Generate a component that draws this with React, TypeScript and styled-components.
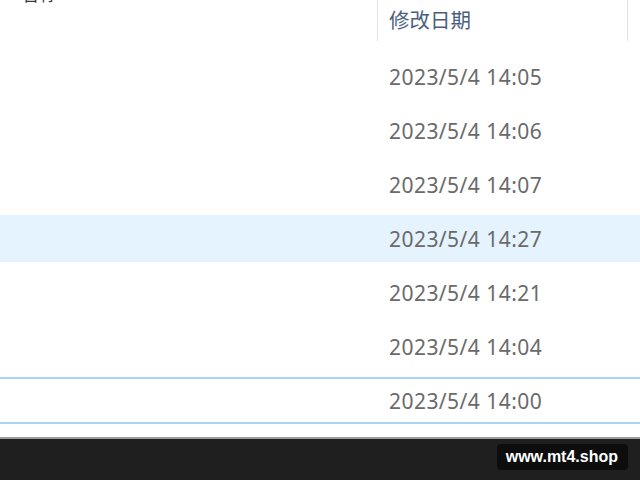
import React from "react";
import styled, { createGlobalStyle } from "styled-components";

const Global = createGlobalStyle`
  html, body { margin: 0; padding: 0; background: #ffffff; overflow: hidden; }
  #root { width: 640px; height: 480px; }
`;

const Page = styled.div`
  width: 640px;
  height: 480px;
  display: flex;
  flex-direction: column;
  background: #ffffff;
  font-family: "Noto Sans", "Noto Sans CJK SC", sans-serif;
  overflow: hidden;
`;

const Header = styled.div`
  display: flex;
  height: 41px;
  flex: 0 0 auto;
`;

const NameHeader = styled.div`
  flex: 0 0 377px;
  padding-left: 21px;
  box-sizing: border-box;
  overflow: hidden;
  font-family: "Noto Sans CJK SC", sans-serif;
  font-size: 18px;
  color: #3a3a3a;
  line-height: 20px;
  & > span { display: block; margin-top: -17px; }
`;

const DateHeader = styled.div`
  flex: 0 0 251px;
  box-sizing: border-box;
  border-left: 1px solid #e3e3e3;
  border-right: 1px solid #e3e3e3;
  padding: 7px 0 0 11px;
  font-family: "Noto Sans CJK SC", sans-serif;
  font-size: 20.5px;
  color: #4a5f7e;
  line-height: 24px;
`;

const Spacer = styled.div`
  height: 9px;
  flex: 0 0 auto;
`;

const List = styled.div`
  display: flex;
  flex-direction: column;
  flex: 0 0 auto;
`;

const Row = styled.div`
  padding: 3px 0 4px;
  height: 54px;
  box-sizing: border-box;
`;

const RowInner = styled.div<{ $selected?: boolean; $focused?: boolean }>`
  height: 47px;
  box-sizing: border-box;
  display: flex;
  align-items: center;
  background: ${(p) => (p.$selected ? "#e5f3ff" : "transparent")};
  border-top: 2px solid ${(p) => (p.$focused ? "#a9d5f5" : "transparent")};
  border-bottom: 2px solid ${(p) => (p.$focused ? "#a9d5f5" : "transparent")};
`;

const DateCell = styled.div`
  margin-left: 389px;
  font-size: 21px;
  line-height: 26px;
  color: #6a6a6a;
  letter-spacing: 0.45px;
`;

const Fill = styled.div`
  flex: 1 1 auto;
`;

const Taskbar = styled.div`
  flex: 0 0 43px;
  background: #1f1f1f;
  border-top: 2px solid #9a9a9a;
  box-sizing: border-box;
  display: flex;
  justify-content: flex-end;
  align-items: flex-start;
  padding: 5px 12px 0 0;
`;

const Badge = styled.div`
  background: #0d0d0d;
  border-radius: 4px;
  height: 26px;
  padding: 0 10px 0 9px;
  display: flex;
  align-items: center;
  color: #ffffff;
  font-family: "Liberation Sans", Arial, sans-serif;
  font-weight: bold;
  font-size: 16px;
`;

const rows = [
  { t: "2023/5/4 14:05" },
  { t: "2023/5/4 14:06" },
  { t: "2023/5/4 14:07" },
  { t: "2023/5/4 14:27", selected: true },
  { t: "2023/5/4 14:21" },
  { t: "2023/5/4 14:04" },
  { t: "2023/5/4 14:00", focused: true },
];

export default function App() {
  return (
    <>
      <Global />
      <Page>
        <Header>
          <NameHeader>
            <span>名称</span>
          </NameHeader>
          <DateHeader>修改日期</DateHeader>
        </Header>
        <Spacer />
        <List>
          {rows.map((r) => (
            <Row key={r.t}>
              <RowInner $selected={r.selected} $focused={r.focused}>
                <DateCell>{r.t}</DateCell>
              </RowInner>
            </Row>
          ))}
        </List>
        <Fill />
        <Taskbar>
          <Badge>www.mt4.shop</Badge>
        </Taskbar>
      </Page>
    </>
  );
}
